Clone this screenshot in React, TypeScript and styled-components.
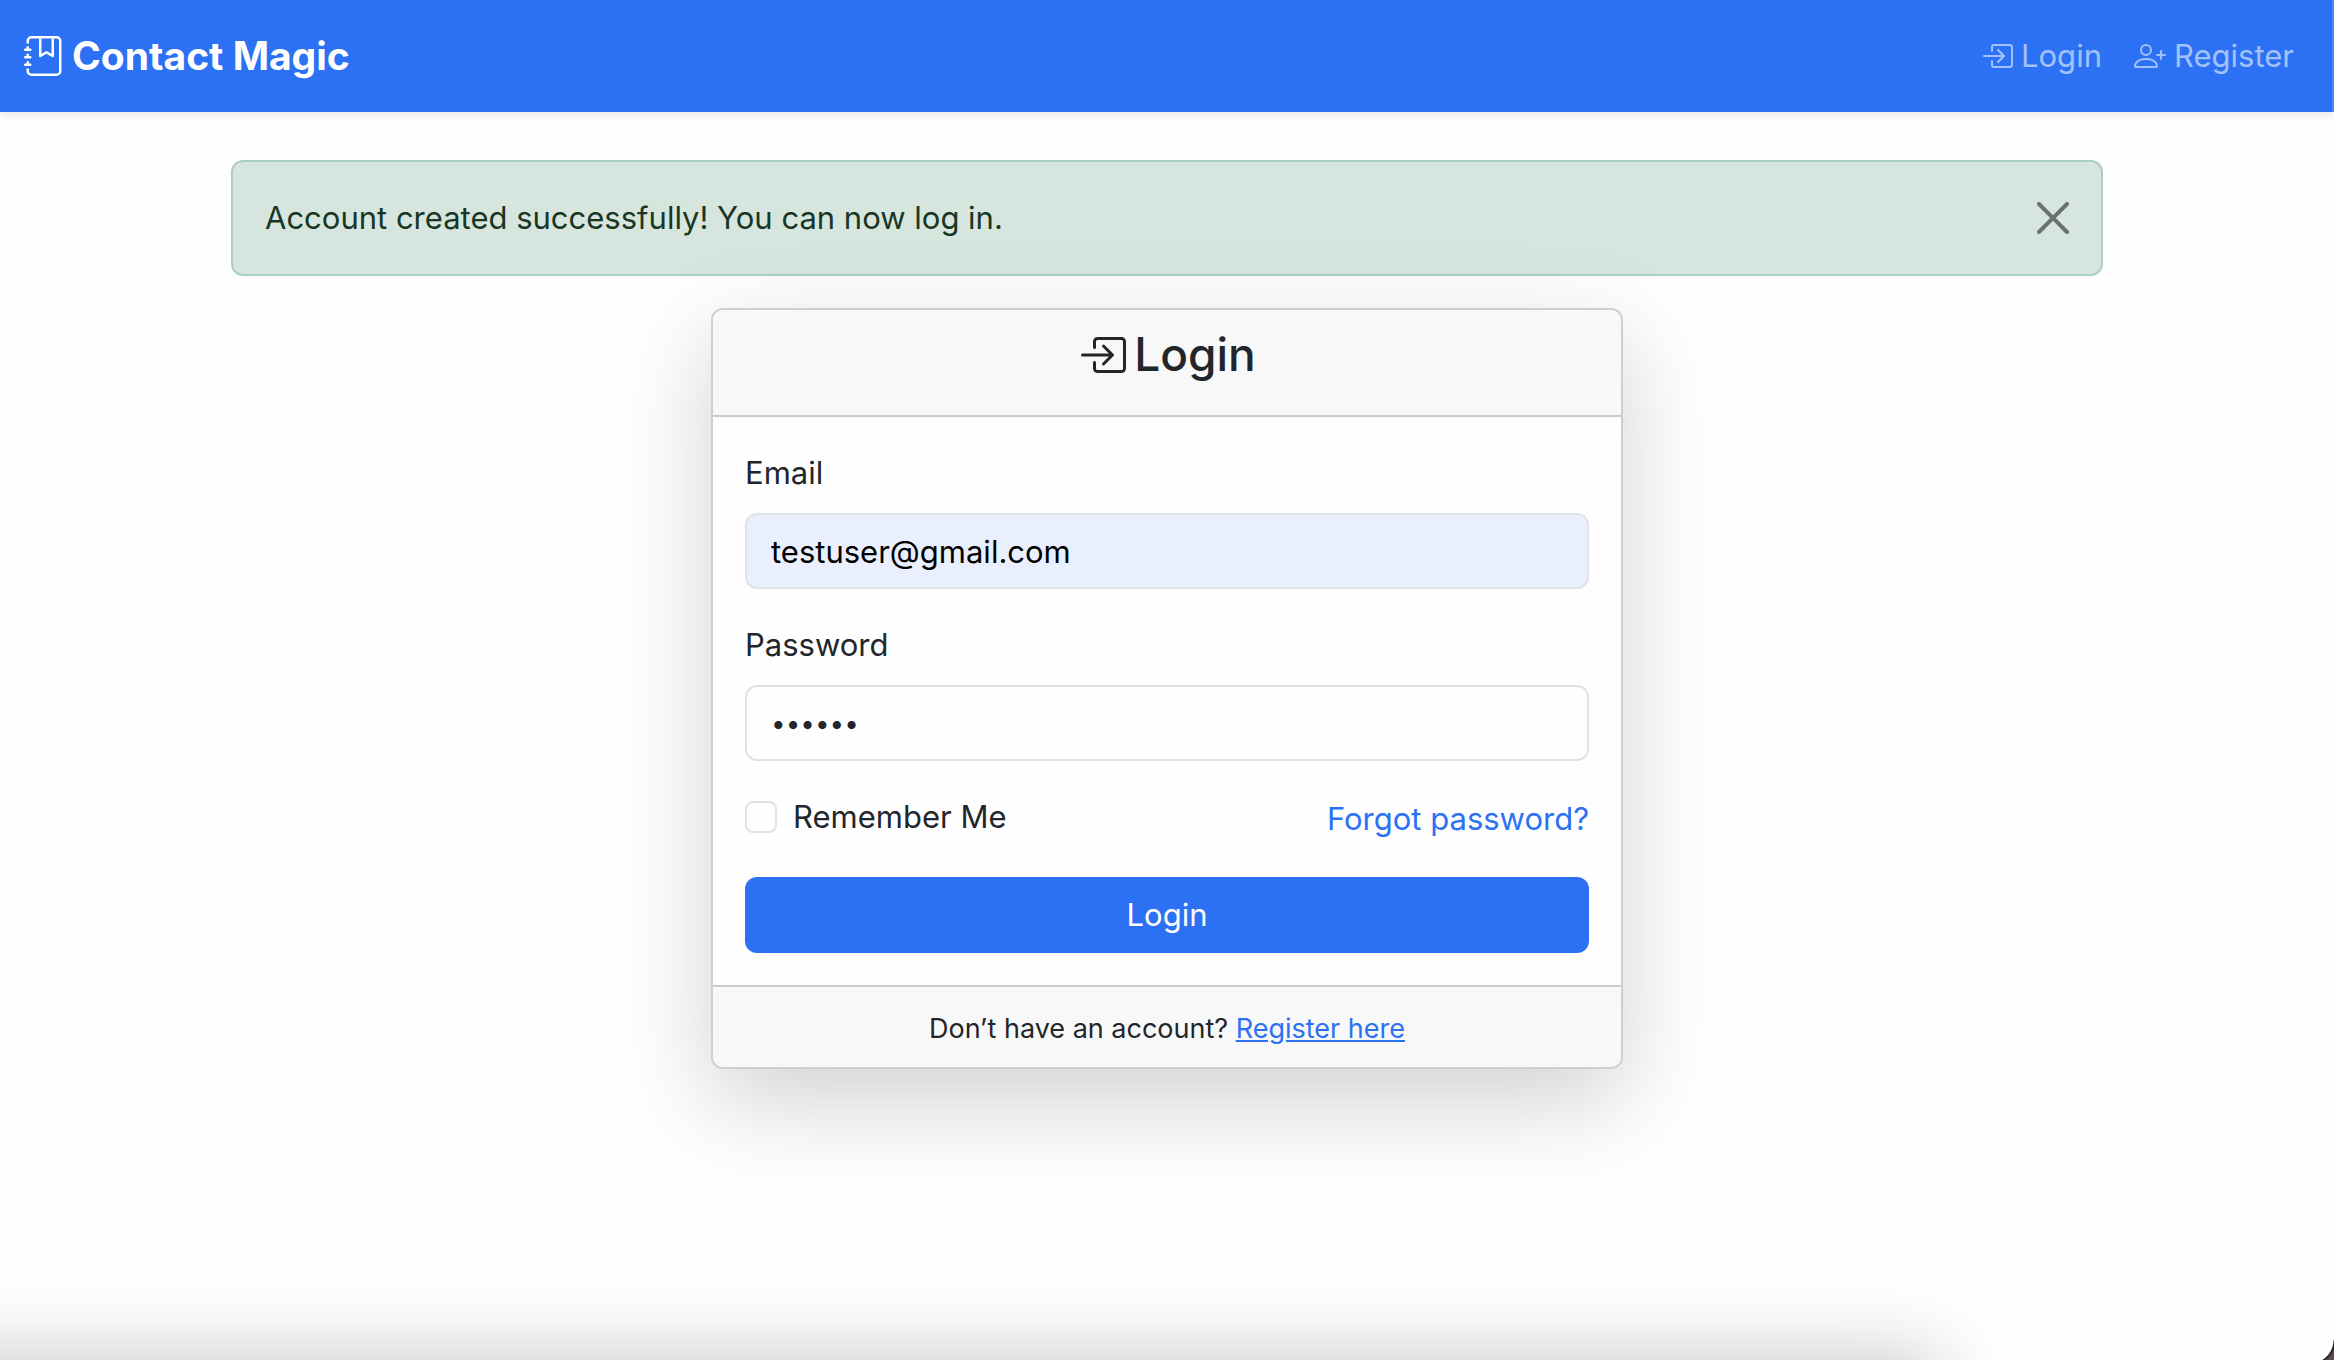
import React, { useState } from "react";
import styled, { createGlobalStyle } from "styled-components";
import { BsJournalBookmark, BsBoxArrowInRight, BsPersonPlus } from "react-icons/bs";

const blue = "#2c71f4";
const ink = "#22262a";

const GlobalStyle = createGlobalStyle`
  *, *::before, *::after { box-sizing: border-box; }
  body {
    margin: 0;
    background: #fefefe;
    color: ${ink};
    font-family: Inter, "Liberation Sans", sans-serif;
    font-size: 31px;
    line-height: 48px;
  }
  button, input { font: inherit; color: inherit; }
  svg { flex: none; }
`;

const Page = styled.div`
  display: flex;
  flex-direction: column;
  min-height: 100vh;
`;

const Navbar = styled.nav`
  display: flex;
  align-items: center;
  justify-content: space-between;
  padding: 16px 22px 16px 24px;
  background: ${blue};
  border-right: 2px solid #4d88f6;
  box-shadow: 0 4px 8px rgba(0, 0, 0, 0.075);
`;

const Brand = styled.a`
  display: flex;
  align-items: center;
  gap: 8px;
  padding: 10px 0;
  color: #fefefe;
  font-size: 39px;
  font-weight: 700;
  line-height: 60px;
  text-decoration: none;
`;

const NavLinks = styled.ul`
  display: flex;
  margin: 0;
  padding: 0;
  list-style: none;
`;

const NavLink = styled.a`
  display: flex;
  align-items: center;
  gap: 8px;
  padding: 16px;
  color: #a2c1fa;
  text-decoration: none;
`;

const Container = styled.main`
  flex: 1;
  width: 100%;
  max-width: 1920px;
  margin: 0 auto;
  padding: 48px 24px;
`;

const Alert = styled.div`
  display: flex;
  align-items: center;
  justify-content: space-between;
  margin-bottom: 32px;
  padding: 32px;
  border: 2px solid #abd0bf;
  border-radius: 12px;
  background: #d6e6de;
  color: #193625;
`;

const CloseButton = styled.button`
  display: flex;
  padding: 0;
  border: 0;
  background: none;
  color: #000;
  opacity: 0.5;
`;

const Card = styled.section`
  width: calc(50% - 24px);
  min-width: 640px;
  margin: 0 auto;
  border: 2px solid #cfcfcf;
  border-radius: 12px;
  background: #fefefe;
  box-shadow: 0 32px 96px rgba(0, 0, 0, 0.175);
  overflow: hidden;
`;

const CardHeader = styled.header`
  padding: 16px 32px 32px;
  border-bottom: 2px solid #cbcbcb;
  background: #f8f8f8;
`;

const Title = styled.h1`
  display: flex;
  align-items: center;
  justify-content: center;
  gap: 8px;
  margin: 0;
  font-size: 46px;
  font-weight: 500;
  line-height: 57px;
`;

const Form = styled.form`
  display: flex;
  flex-direction: column;
  gap: 32px;
  padding: 32px;
`;

const Field = styled.div`
  display: flex;
  flex-direction: column;
  gap: 16px;
`;

const TextInput = styled.input<{ $filled?: boolean }>`
  width: 100%;
  height: 76px;
  padding: 12px 24px;
  border: 2px solid #dfe2e7;
  border-radius: 12px;
  outline: 0;
  background: ${(p) => (p.$filled ? "#e9effd" : "#fefefe")};
  color: ${(p) => (p.$filled ? "#000" : ink)};
  &[type="password"] { font-size: 26px; }
`;

const Options = styled.div`
  display: flex;
  align-items: center;
  justify-content: space-between;
`;

const Check = styled.label`
  display: flex;
  align-items: center;
  gap: 16px;
  margin-bottom: 4px;
`;

const Checkbox = styled.input`
  appearance: none;
  width: 32px;
  height: 32px;
  margin: 0;
  border: 2px solid #dfe2e7;
  border-radius: 8px;
  background: #fefefe;
  &:checked { background: ${blue}; border-color: ${blue}; }
`;

const TextLink = styled.a<{ $underline?: boolean }>`
  color: ${blue};
  text-decoration: ${(p) => (p.$underline ? "underline" : "none")};
`;

const Submit = styled.button`
  height: 76px;
  border: 0;
  border-radius: 12px;
  background: ${blue};
  color: #fefefe;
`;

const CardFooter = styled.footer`
  padding: 18px 32px 14px;
  border-top: 2px solid #cbcbcb;
  background: #f8f8f8;
  font-size: 27px;
  text-align: center;
`;

const BottomShade = styled.div`
  position: fixed;
  top: 100%;
  left: -100px;
  right: 17%;
  height: 200px;
  box-shadow: 0 0 80px rgba(0, 0, 0, 0.24);
  pointer-events: none;
`;

const WindowCorner = styled.div`
  position: fixed;
  right: 0;
  bottom: 0;
  width: 24px;
  height: 20px;
  background: radial-gradient(circle at 0 0, transparent 23px, #15151a 24px, #5c4c4e 26px);
  pointer-events: none;
`;

export default function App() {
  const [alertOpen, setAlertOpen] = useState(true);
  return (
    <Page>
      <GlobalStyle />
      <Navbar>
        <Brand href="#">
          <BsJournalBookmark size={40} />
          Contact Magic
        </Brand>
        <NavLinks>
          <li>
            <NavLink href="#login">
              <BsBoxArrowInRight size={32} />
              Login
            </NavLink>
          </li>
          <li>
            <NavLink href="#register">
              <BsPersonPlus size={32} />
              Register
            </NavLink>
          </li>
        </NavLinks>
      </Navbar>
      <Container>
        {alertOpen && (
          <Alert role="alert">
            Account created successfully! You can now log in.
            <CloseButton aria-label="Close" onClick={() => setAlertOpen(false)}>
              <svg width="32" height="32" viewBox="0 0 16 16" fill="currentColor">
                <path d="M.293.293a1 1 0 0 1 1.414 0L8 6.586 14.293.293a1 1 0 1 1 1.414 1.414L9.414 8l6.293 6.293a1 1 0 0 1-1.414 1.414L8 9.414l-6.293 6.293a1 1 0 0 1-1.414-1.414L6.586 8 .293 1.707a1 1 0 0 1 0-1.414z" />
              </svg>
            </CloseButton>
          </Alert>
        )}
        <Card>
          <CardHeader>
            <Title>
              <BsBoxArrowInRight size={48} />
              Login
            </Title>
          </CardHeader>
          <Form onSubmit={(e) => e.preventDefault()}>
            <Field>
              <label htmlFor="email">Email</label>
              <TextInput id="email" type="email" $filled defaultValue="testuser@gmail.com" />
            </Field>
            <Field>
              <label htmlFor="password">Password</label>
              <TextInput id="password" type="password" defaultValue="secret" />
            </Field>
            <Options>
              <Check htmlFor="remember">
                <Checkbox id="remember" type="checkbox" />
                Remember Me
              </Check>
              <TextLink href="#forgot">Forgot password?</TextLink>
            </Options>
            <Submit type="submit">Login</Submit>
          </Form>
          <CardFooter>
            Don’t have an account?{" "}
            <TextLink href="#register" $underline>
              Register here
            </TextLink>
          </CardFooter>
        </Card>
      </Container>
      <BottomShade />
      <WindowCorner />
    </Page>
  );
}
